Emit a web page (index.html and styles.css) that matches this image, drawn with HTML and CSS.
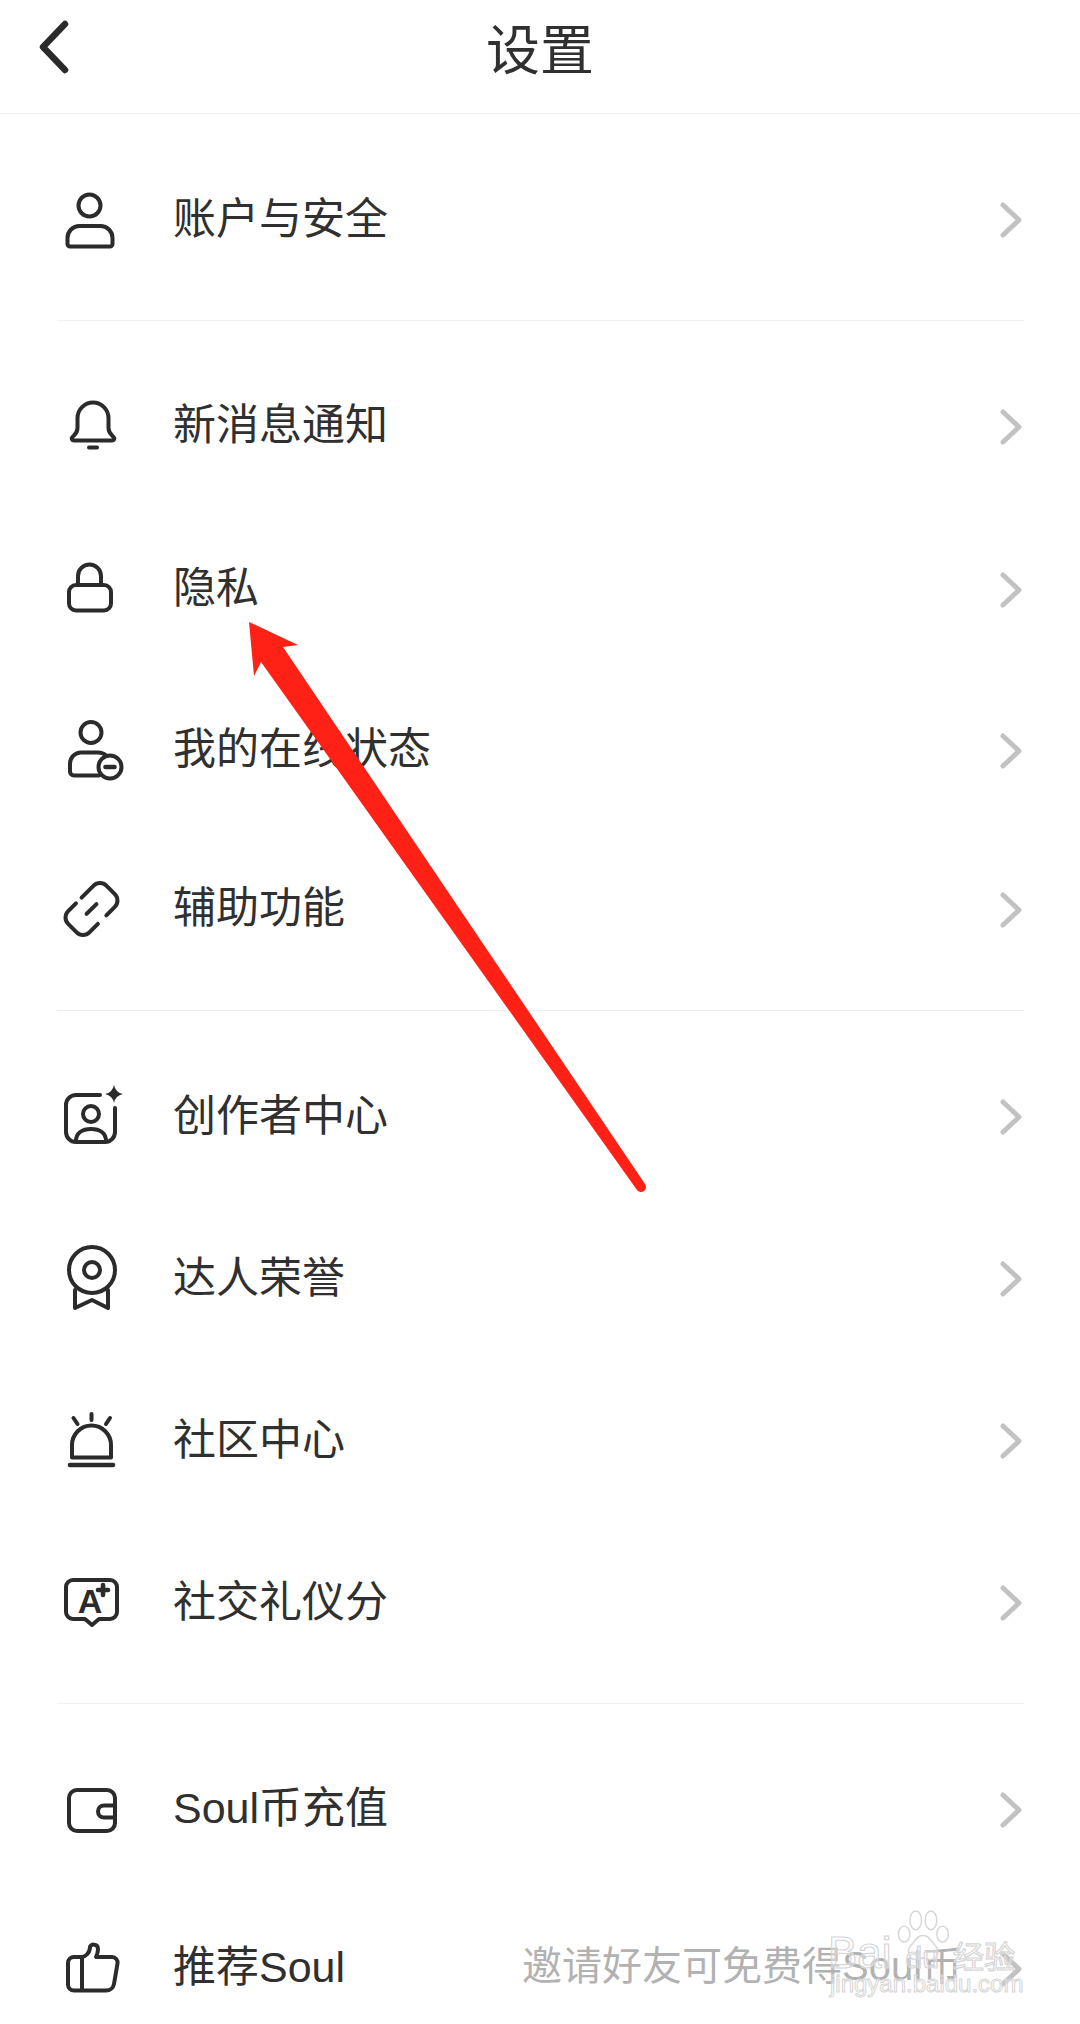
FILE: index.html
```html
<!DOCTYPE html>
<html lang="zh-CN">
<head>
    <meta charset="UTF-8">
    <meta name="viewport" content="width=device-width, initial-scale=1.0">
    <title>设置</title>
    <link rel="stylesheet" href="styles.css">
</head>
<body>
    <svg width="0" height="0" class="defs">
        <symbol id="chevron" viewBox="0 0 24 40">
            <path d="M4 5 L20 20 L4 35" />
        </symbol>
    </svg>

    <header class="topbar">
        <svg class="back" viewBox="0 0 36 56"><path d="M29 5 L7 28 L29 51" /></svg>
        <h1 class="title">设置</h1>
        <span></span>
    </header>

    <section class="group">
        <div class="row">
            <svg class="icon" viewBox="0 0 80 80"><circle cx="37.5" cy="28.5" r="11" /><path d="M18 69.5h40a2.5 2.5 0 0 0 2.5-2.5v-6a12 12 0 0 0-12-12h-21a12 12 0 0 0-12 12v6a2.5 2.5 0 0 0 2.5 2.5z" /></svg>
            <span class="label">账户与安全</span>
            <svg class="arrow-right"><use href="#chevron" /></svg>
        </div>
    </section>

    <section class="group group-b">
        <div class="row row-lg">
            <svg class="icon" viewBox="0 0 80 80"><path d="M25.5 34a15.5 15.5 0 0 1 31 0v10c0 5 3 7 5 9c1.5 1.5.5 3.5-1.5 3.5H22c-2 0-3-2-1.5-3.5c2-2 5-4 5-9z" /><path d="M37 63.5h8" /></svg>
            <span class="label">新消息通知</span>
            <svg class="arrow-right"><use href="#chevron" /></svg>
        </div>
        <div class="row row-lg">
            <svg class="icon" viewBox="0 0 80 80"><rect x="17" y="38" width="42" height="25.5" rx="7" /><path d="M26 38v-9a11.5 11.5 0 0 1 23 0v9" /></svg>
            <span class="label">隐私</span>
            <svg class="arrow-right"><use href="#chevron" /></svg>
        </div>
        <div class="row row-sm">
            <svg class="icon" viewBox="0 0 80 80"><circle cx="39" cy="24.5" r="10.5" /><path d="M47 67.5H22a4 4 0 0 1-4-4v-8a11 11 0 0 1 11-11h17c3 0 6 1 8 3" /><circle cx="58" cy="59" r="11.5" /><path class="thick" d="M53.5 59h9" /></svg>
            <span class="label">我的在线状态</span>
            <svg class="arrow-right"><use href="#chevron" /></svg>
        </div>
        <div class="row row-sm">
            <svg class="icon" viewBox="0 0 80 80"><g transform="translate(39.5 42) rotate(-45)"><path d="M1-15H18a9 9 0 0 1 9 9V6a9 9 0 0 1-9 9H6" /><path d="M-6 15H-18a9 9 0 0 1-9-9V-6a9 9 0 0 1 9-9H-7" /><path d="M-7 0H7" /></g></svg>
            <span class="label">辅助功能</span>
            <svg class="arrow-right"><use href="#chevron" /></svg>
        </div>
    </section>

    <section class="group group-c">
        <div class="row">
            <svg class="icon" viewBox="0 0 80 80"><path d="M48 21H24a10 10 0 0 0-10 10V58a10 10 0 0 0 10 10H53a10 10 0 0 0 10-10V34" /><circle cx="39" cy="40" r="8" /><path d="M24 67c0-8 6-12 15-12s15 4 15 12" /><path class="solid" d="M62 11q1.5 7.5 9 9q-7.5 1.5-9 9q-1.5-7.5-9-9q7.5-1.5 9-9z" /></svg>
            <span class="label">创作者中心</span>
            <svg class="arrow-right"><use href="#chevron" /></svg>
        </div>
        <div class="row">
            <svg class="icon" viewBox="0 0 80 80"><circle cx="40" cy="34" r="23" /><circle cx="40" cy="34" r="8" /><path d="M23 54V72L40 64L56 72V54" /></svg>
            <span class="label">达人荣誉</span>
            <svg class="arrow-right"><use href="#chevron" /></svg>
        </div>
        <div class="row">
            <svg class="icon" viewBox="0 0 80 80"><path d="M20 59.5V47a19.5 19.5 0 0 1 39 0V59.5z" /><path class="thick" d="M18 67H61" /><path d="M39.5 16v6M21.5 20l4 6M58 20l-4 6" /></svg>
            <span class="label">社区中心</span>
            <svg class="arrow-right"><use href="#chevron" /></svg>
        </div>
        <div class="row">
            <svg class="icon" viewBox="0 0 80 80"><path d="M21 20H58a7 7 0 0 1 7 7V52a7 7 0 0 1-7 7H47l-7 6-7-6H21a7 7 0 0 1-7-7V27a7 7 0 0 1 7-7z" /><text class="icon-letter" x="38" y="53">A</text><path class="thick" d="M51 25v10M46 30h10" /></svg>
            <span class="label">社交礼仪分</span>
            <svg class="arrow-right"><use href="#chevron" /></svg>
        </div>
    </section>

    <section class="group group-d">
        <div class="row row-sm">
            <svg class="icon" viewBox="0 0 80 80"><rect x="17" y="23" width="46" height="41" rx="8" /><path d="M63 38.5H52a6 6 0 0 0 0 12H63" /></svg>
            <span class="label">Soul币充值</span>
            <svg class="arrow-right"><use href="#chevron" /></svg>
        </div>
        <div class="row row-sm">
            <svg class="icon" viewBox="0 0 80 80"><path d="M30 64.5H22a6 6 0 0 1-6-6V37a6 6 0 0 1 6-6H30c3 0 8-4 8-10c0-3 8-4 8 2c0 3-1 6-2 8H60a5.5 5.5 0 0 1 5.5 6.5L62 58a8 8 0 0 1-8 6.5H30V31" /></svg>
            <span class="label">推荐Soul</span>
            <svg class="arrow-right"><use href="#chevron" /></svg>
        </div>
    </section>

    <div class="invite">邀请好友可免费得Soul币</div>

    <svg class="annotation" viewBox="0 0 1080 2024">
        <path d="M249 622L298 645L283 647L645 1184A5 5 0 0 1 637 1190L261 662L254 676Z" />
    </svg>

    <div class="watermark">
        <svg class="paw" viewBox="0 0 80 80">
            <ellipse cx="14" cy="36" rx="8" ry="11" />
            <ellipse cx="30" cy="17" rx="8" ry="13" />
            <ellipse cx="51" cy="17" rx="8" ry="13" />
            <ellipse cx="67" cy="36" rx="8" ry="11" />
            <path d="M40 38c-9 0-11 8-17 14c-6 7-3 20 8 19c5 0 6-2 9-2s5 2 10 2c11 0 13-13 7-19c-6-6-8-14-17-14z" />
        </svg>
        <div class="wm-brand"><span>Bai</span><span class="wm-du">du</span><span class="wm-cn">经验</span></div>
        <div class="wm-url">jingyan.baidu.com</div>
    </div>
</body>
</html>
```

FILE: styles.css
```css
* {
    box-sizing: border-box;
}
html, body {
    margin: 0;
    padding: 0;
}
body {
    position: relative;
    width: 1080px;
    height: 2024px;
    overflow: hidden;
    background-color: #fff;
    color: #303030;
    font-family: "Noto Sans CJK SC", "Noto Sans", sans-serif;
}
.defs {
    position: absolute;
}

.topbar {
    display: grid;
    grid-template-columns: 1fr auto 1fr;
    align-items: center;
    height: 114px;
    padding-bottom: 19px;
    border-bottom: 1px solid #f0f0f0;
}
.back {
    width: 36px;
    height: 56px;
    margin-left: 36px;
    fill: none;
    stroke: #2b2b2b;
    stroke-width: 6.5;
    stroke-linecap: round;
    stroke-linejoin: round;
}
.title {
    margin: 0;
    font-size: 54px;
    font-weight: 400;
    line-height: 90px;
}

.group {
    margin: 0 56px 0 57px;
    padding: 22px 0;
    border-bottom: 1px solid #efefef;
}
.group-b {
    padding: 21px 0 24px;
}
.group-c {
    padding: 22px 0;
}
.group-d {
    padding: 23px 0 0;
    border-bottom: none;
}

.row {
    display: flex;
    align-items: center;
    height: 162px;
}
.row-lg {
    height: 163px;
}
.row-sm {
    height: 159px;
}
.icon {
    flex: none;
    width: 80px;
    height: 80px;
    margin: 0 41px 0 -5px;
    fill: none;
    stroke: #2b2b2b;
    stroke-width: 4;
    stroke-linecap: round;
    stroke-linejoin: round;
}
.icon .thick {
    stroke-width: 4.6;
}
.icon .solid {
    fill: #2b2b2b;
    stroke: none;
}
.icon-letter {
    fill: #2b2b2b;
    stroke: none;
    font-family: "Liberation Sans", sans-serif;
    font-size: 34px;
    font-weight: 700;
    text-anchor: middle;
}
.label {
    flex: 1;
    margin-top: 3px;
    font-family: "Liberation Sans", "Noto Sans CJK SC", sans-serif;
    font-size: 43px;
    line-height: 60px;
}
.arrow-right {
    flex: none;
    width: 24px;
    height: 40px;
    margin: 6px 1px 0 0;
    fill: none;
    stroke: #c2c2c2;
    stroke-width: 5;
    stroke-linecap: round;
    stroke-linejoin: round;
}

.invite {
    position: absolute;
    left: 522px;
    top: 1941px;
    font-family: "Liberation Sans", "Noto Sans CJK SC", sans-serif;
    font-size: 40px;
    line-height: 50px;
    color: #b2b2b2;
    white-space: nowrap;
}

.annotation {
    position: absolute;
    left: 0;
    top: 0;
    width: 1080px;
    height: 2024px;
    fill: #ff2116;
    pointer-events: none;
}

.watermark {
    position: absolute;
    left: 828px;
    top: 1905px;
    width: 200px;
    height: 100px;
    color: rgba(255, 255, 255, 0.35);
}
.paw {
    position: absolute;
    left: 66px;
    top: 3px;
    width: 58px;
    height: 58px;
    fill: rgba(255, 255, 255, 0.35);
    stroke: #d6d6d6;
    stroke-width: 2;
}
.wm-brand {
    position: absolute;
    left: 0;
    top: 22px;
    font-family: "Liberation Sans", sans-serif;
    font-size: 44px;
    line-height: 52px;
    white-space: nowrap;
    -webkit-text-stroke: 1.2px #d6d6d6;
}
.wm-du {
    margin-left: 14px;
    font-size: 30px;
}
.wm-cn {
    margin-left: 14px;
    font-family: "Noto Sans CJK SC", sans-serif;
    font-size: 31px;
}
.wm-url {
    position: absolute;
    left: 2px;
    top: 64px;
    font-family: "Liberation Sans", sans-serif;
    font-size: 24px;
    line-height: 30px;
    white-space: nowrap;
    -webkit-text-stroke: 1px #d6d6d6;
}
```
